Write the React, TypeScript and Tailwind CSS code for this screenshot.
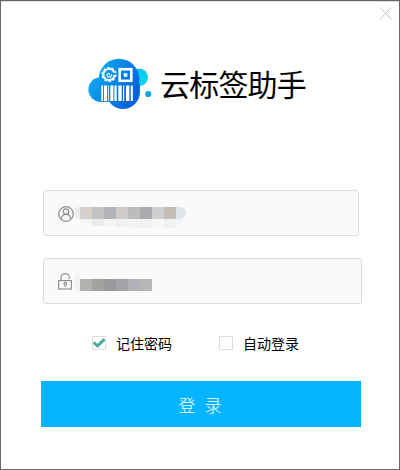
import type { ReactNode } from "react";

function Logo() {
  return (
    <svg width="66" height="54" viewBox="0 0 66 54" className="block shrink-0">
      <defs>
        <linearGradient id="cloud" gradientUnits="userSpaceOnUse" x1="4" y1="18" x2="44" y2="42">
          <stop offset="0" stopColor="#0cabf4" />
          <stop offset="0.5" stopColor="#0583e6" />
          <stop offset="1" stopColor="#0264da" />
        </linearGradient>
        <linearGradient id="puff" x1="0" y1="0" x2="1" y2="1">
          <stop offset="0" stopColor="#04b8f2" />
          <stop offset="1" stopColor="#12dff2" />
        </linearGradient>
      </defs>
      <circle cx="51.300" cy="20.300" r="8.700" fill="url(#puff)" />
      <g fill="url(#cloud)">
        <circle cx="12.700" cy="32.500" r="12.300" />
        <circle cx="31" cy="22" r="20.300" />
        <circle cx="35" cy="35" r="17" />
        <circle cx="40.500" cy="30" r="11.500" />
        <path d="M12 44.800h12V30H12z" />
      </g>
      <circle cx="60.300" cy="37" r="3.100" fill="#0ea5e8" />
      <g fill="none" stroke="#fff">
        <circle cx="21" cy="17.500" r="5.600" strokeWidth="1.900" strokeDasharray="32 3.200" transform="rotate(5 21 17.500)" />
        <circle cx="21" cy="17.500" r="6.900" strokeWidth="1.400" strokeDasharray="2.700 1.635" />
        <path d="M21 18c.8-.3.8-1.500-.3-1.500-1.700 0-2.200 2.300-.9 3.200 2 1.300 4.400-.3 4-2.700" strokeWidth="1.200" />
        <rect x="31.700" y="12.200" width="11.600" height="11.600" strokeWidth="2.600" />
      </g>
      <g fill="#fff">
        <rect x="35.700" y="16.200" width="3.600" height="3.600" />
        <rect x="13.300" y="28.500" width="1.700" height="15.500" />
        <rect x="16" y="28.500" width="3" height="15.500" />
        <rect x="19.900" y="28.500" width="0.900" height="15.500" />
        <rect x="22.300" y="28.500" width="3.100" height="15.500" />
        <rect x="26.400" y="28.500" width="2.300" height="15.500" />
        <rect x="30.300" y="28.500" width="3.400" height="15.500" />
        <rect x="35" y="28.500" width="1.200" height="15.500" />
        <rect x="38" y="28.500" width="3.300" height="15.500" />
        <rect x="42.700" y="28.500" width="2.100" height="15.500" />
      </g>
    </svg>
  );
}

function UserIcon() {
  return (
    <svg width="16" height="16" viewBox="0 0 16 16" fill="none" stroke="#929292" strokeWidth="1.300" className="block shrink-0">
      <circle cx="8" cy="8" r="7.300" />
      <circle cx="8" cy="5.500" r="2.700" />
      <path d="M3 13c.5-3 2.500-4.600 5-4.600s4.500 1.600 5 4.600" />
    </svg>
  );
}

function LockIcon() {
  return (
    <svg width="14" height="17" viewBox="0 0 14 17" fill="none" stroke="#929292" strokeWidth="1.200" className="block shrink-0">
      <rect x="0.600" y="7.600" width="12.800" height="8.400" />
      <path d="M3 7.500V4.500C3 2 4.700.7 7 .7s4 1.300 4.300 3.800V6" />
      <circle cx="7.300" cy="10.700" r="1.300" />
      <path d="M7.300 12v2" />
    </svg>
  );
}

function Option({ label, checked = false }: { label: string; checked?: boolean }) {
  return (
    <label className="flex h-5 w-[127px] items-center gap-[10px]">
      <span className="flex size-[14px] shrink-0 items-center justify-center rounded-[1px] border border-[#dcdcdc] bg-white">
        {checked && (
          <svg width="12" height="12" viewBox="0 0 12 12" fill="none" stroke="#45ad9f" strokeWidth="3" className="block shrink-0">
            <path d="M.7 5.300 4.500 9 11.500 2.200" />
          </svg>
        )}
      </span>
      <span className="whitespace-nowrap text-[14px] leading-5">{label}</span>
    </label>
  );
}

function Field({ className, children }: { className: string; children: ReactNode }) {
  return (
    <div className={`flex h-[46px] rounded-[3px] border border-[#dcdcdc] bg-[#fafafa] pl-[14px] ${className}`}>
      {children}
    </div>
  );
}

export default function App() {
  return (
    <main className="flex h-[470px] w-[400px] flex-col border border-[#666] bg-white font-['Noto_Sans_CJK_SC',sans-serif] text-black">
      <header className="flex h-[56px] justify-end border-t border-[#ddd] pr-[7px] pt-[5px]">
        <svg width="13" height="13" viewBox="0 0 13 13" stroke="#c0c5d2" strokeWidth="1" className="block">
          <path d="M.5.5l12 12M12.500.5l-12 12" />
        </svg>
      </header>
      <div className="flex h-[54px] pl-[87px]">
        <Logo />
        <h1 className="ml-[6px] whitespace-nowrap text-[30px] leading-[52px] tracking-[-0.8px]">云标签助手</h1>
      </div>

      <form className="mt-[79px] flex flex-col">
        <Field className="ml-[42px] w-[316px]">
          <div className="mt-[15px]"><UserIcon /></div>
          <div className="mt-4 ml-px">
            <div className="flex h-3">
              <span className="w-[5px] rounded-l bg-[#ececec]" />
              <span className="w-3 bg-[#d6d0cc]" />
              <span className="w-3 bg-[#c3c3c3]" />
              <span className="w-3 bg-[#b3b4b9]" />
              <span className="w-3 bg-[#cfccc8]" />
              <span className="w-3 bg-[#bcbcbc]" />
              <span className="w-3 bg-[#aaabae]" />
              <span className="w-3 bg-[#cfcfcd]" />
              <span className="w-3 bg-[#c4bcb7]" />
              <span className="w-[10px] rounded-r-lg bg-[#dfe6eb]" />
            </div>
            <div className="flex h-[9px] pl-[5px]">
              <span className="h-1 w-3 rounded-bl bg-[#f3f3f3]" />
              <span className="h-[7px] w-3 bg-[#ebebeb]" />
              <span className="h-[7px] w-3 bg-[#f5f5f5]" />
              <span className="h-2 w-3 bg-[#f1f1f1]" />
              <span className="h-[9px] w-3 bg-[#f4f4f4]" />
              <span className="h-[9px] w-3 bg-[#f1f1f1]" />
              <span className="h-[9px] w-3 bg-[#f6f6f6]" />
              <span className="h-[9px] w-3 bg-[#f0f1f1]" />
              <span className="h-[6px] w-2 rounded-br-md bg-[#f3f4f5]" />
            </div>
          </div>
        </Field>

        <Field className="mt-[22px] ml-[42px] w-[319px]">
          <div className="mt-[14px]"><LockIcon /></div>
          <div className="mt-[14px] ml-[2px] h-[18px] w-[6px] rounded-l-md bg-[#f2f2f2]" />
          <div className="mt-5 flex h-3">
            <span className="w-3 bg-[#b3b3ae]" />
            <span className="w-3 bg-[#a3a29f]" />
            <span className="w-3 bg-[#9b9b9d]" />
            <span className="w-3 bg-[#a3a4a8]" />
            <span className="w-3 bg-[#b0b2b7]" />
            <span className="w-3 bg-[#b6b6b6]" />
          </div>
        </Field>

        <div className="mt-[29px] flex pl-[91px]">
          <Option label="记住密码" checked />
          <Option label="自动登录" />
        </div>

        <button type="button" className="mt-[28px] ml-[40px] flex h-[46px] w-[320px] items-center justify-center gap-[9px] bg-[#05b5ff] pt-[2px] pr-[2px] text-[17px] font-light leading-6 text-white">
          <span>登</span>
          <span>录</span>
        </button>
      </form>
    </main>
  );
}
